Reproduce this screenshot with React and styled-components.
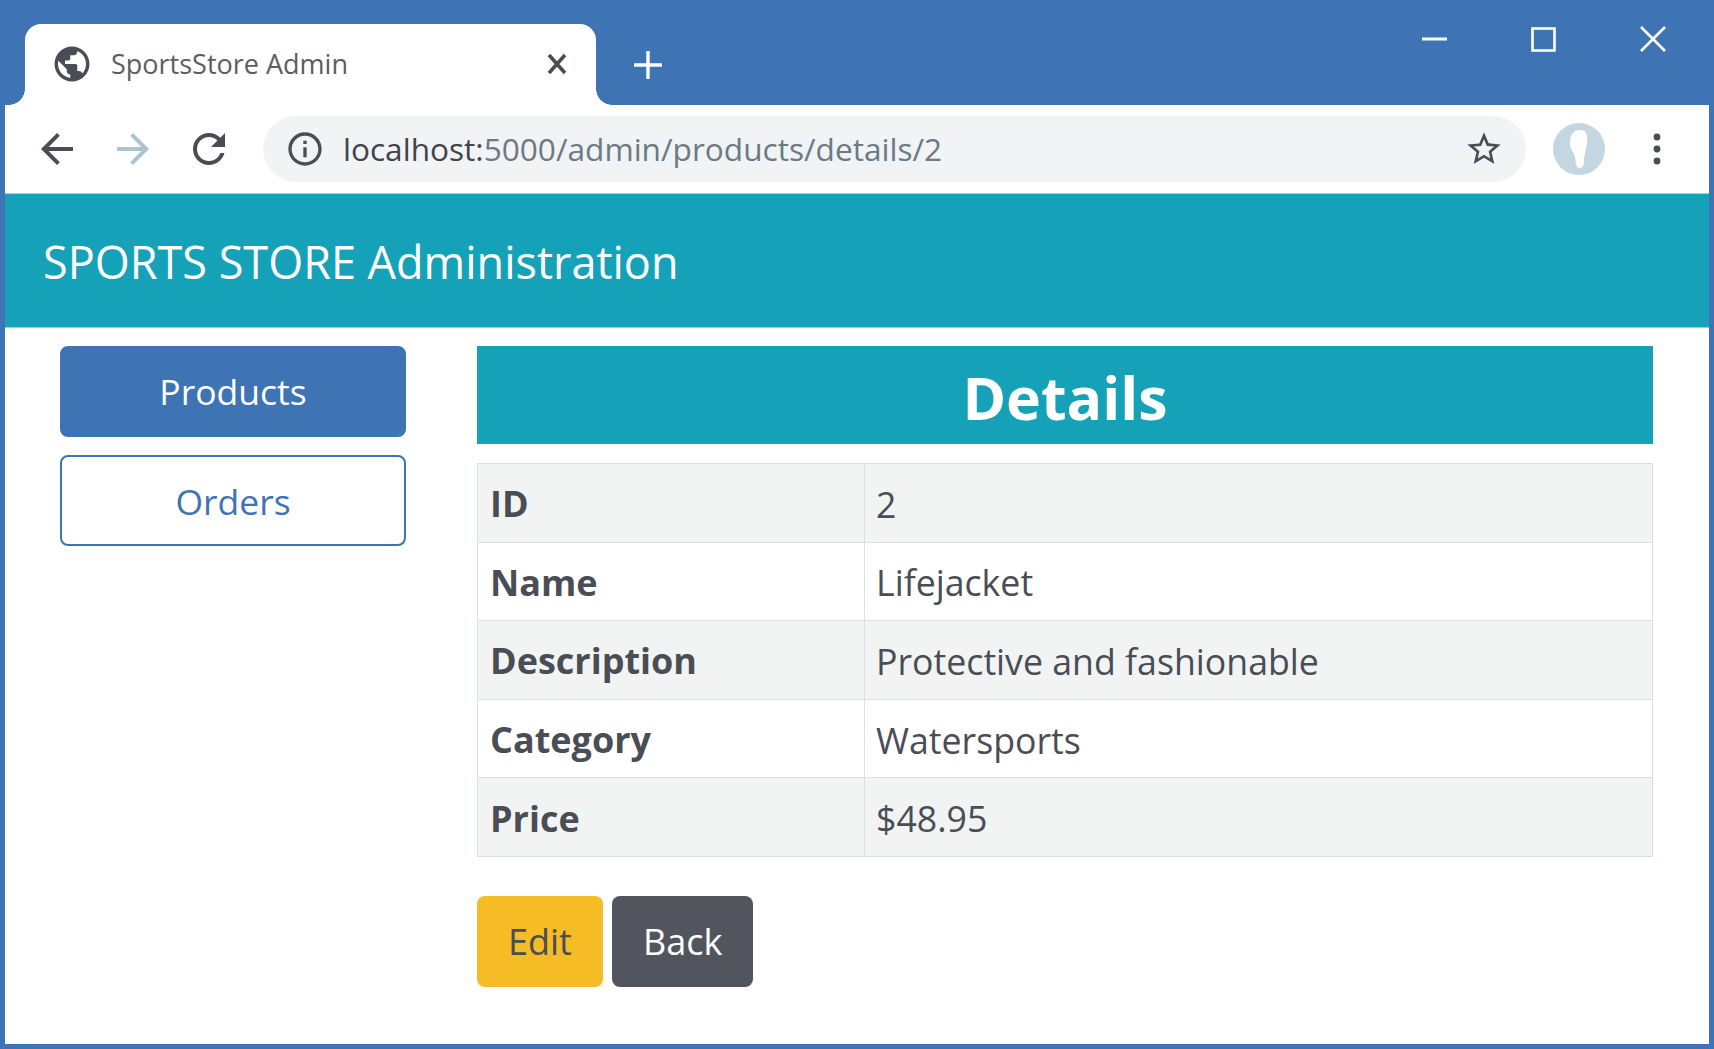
import React from 'react'
import styled, { createGlobalStyle } from 'styled-components'

const GlobalStyle = createGlobalStyle`
  html, body {
    margin: 0;
    padding: 0;
    background: #3e73b4;
  }
  body {
    font-family: "Open Sans", "Noto Sans", sans-serif;
    color: #4a4d55;
  }
`

const Frame = styled.div`
  width: 1714px;
  height: 1049px;
  box-sizing: border-box;
  padding: 0 5px 5px 5px;
  background: #3e73b4;
  display: flex;
  flex-direction: column;
  overflow: hidden;
`

const TabStrip = styled.div`
  height: 105px;
  flex: none;
  display: flex;
  align-items: flex-start;
  padding: 24px 0 0 20px;
  box-sizing: border-box;
`

const Tab = styled.div`
  position: relative;
  width: 571px;
  height: 81px;
  box-sizing: border-box;
  background: #fff;
  border-radius: 16px 16px 0 0;
  display: flex;
  align-items: center;
  padding: 0 28px 2px 26px;
  gap: 18px;

  &::before,
  &::after {
    content: '';
    position: absolute;
    bottom: 0;
    width: 16px;
    height: 16px;
  }
  &::before {
    left: -16px;
    background: radial-gradient(circle at 0 0, transparent 15.5px, #fff 16px);
  }
  &::after {
    right: -16px;
    background: radial-gradient(circle at 100% 0, transparent 15.5px, #fff 16px);
  }
`

const TabTitle = styled.span`
  flex: 1;
  font-size: 27px;
  color: #5a5d64;
  white-space: nowrap;
`

const NewTab = styled.div`
  display: flex;
  margin: 26px 0 0 37px;
`

const WindowControls = styled.div`
  margin-left: auto;
  display: flex;
  align-items: center;
  gap: 84px;
  padding: 2px 43px 0 0;
`

const Toolbar = styled.div`
  height: 89px;
  flex: none;
  box-sizing: border-box;
  background: #fff;
  border-bottom: 1px solid #b5c9d6;
  display: flex;
  align-items: center;
  padding: 0 0 0 28px;
  color: #4a4d55;
`

const NavIcons = styled.div`
  display: flex;
  align-items: center;
  gap: 28px;
`

const Omnibox = styled.div`
  margin-left: 30px;
  width: 1263px;
  height: 66px;
  box-sizing: border-box;
  border-radius: 33px;
  background: #f1f3f4;
  display: flex;
  align-items: center;
  padding: 0 22px 0 22px;
  gap: 18px;
`

const Url = styled.div`
  flex: 1;
  font-size: 31.6px;
  color: #6b7a84;
  white-space: nowrap;
  padding-bottom: 2px;
  b {
    font-weight: 400;
    color: #40444c;
  }
`

const Avatar = styled.div`
  display: flex;
  margin-left: 27px;
`

const MenuDots = styled.div`
  display: flex;
  margin-left: 47px;
`

const Page = styled.div`
  flex: 1;
  background: #fff;
  display: flex;
  flex-direction: column;
`

const Banner = styled.header`
  height: 134px;
  flex: none;
  box-sizing: border-box;
  background: #15a2b8;
  border-bottom: 1px solid #a8c6d4;
  color: #fff;
  font-size: 45px;
  display: flex;
  align-items: center;
  padding: 2px 0 0 38px;
`

const Body = styled.div`
  display: grid;
  grid-template-columns: 346px 1176px;
  column-gap: 71px;
  padding: 18px 0 0 55px;
`

const Sidebar = styled.nav`
  display: flex;
  flex-direction: column;
  gap: 18px;
`

const NavButton = styled.div`
  height: 91px;
  box-sizing: border-box;
  border-radius: 8px;
  border: 2px solid #3e73b4;
  background: ${p => (p.$active ? '#3e73b4' : '#fff')};
  color: ${p => (p.$active ? '#fff' : '#3e73b4')};
  font-size: 35.5px;
  display: flex;
  align-items: center;
  justify-content: center;
  padding-bottom: ${p => (p.$active ? '2px' : '0')};
`

const Main = styled.main`
  display: flex;
  flex-direction: column;
`

const Title = styled.h1`
  margin: 0;
  height: 98px;
  background: #15a2b8;
  color: #fff;
  font-size: 59px;
  font-weight: 700;
  line-height: 102px;
  text-align: center;
`

const DetailsTable = styled.table`
  margin-top: 19px;
  width: 100%;
  height: 394px;
  border-collapse: collapse;
  table-layout: fixed;
  font-size: 36px;
  color: #4a4d55;

  tr:nth-child(odd) {
    background: #f2f4f4;
  }
  th,
  td {
    border: 1px solid #d8e0e5;
    padding: 2px 12px 0;
    text-align: left;
  }
  th {
    width: 362px;
    font-weight: 700;
  }
  td {
    font-size: 35.7px;
    font-weight: 400;
    padding-left: 11px;
  }
`

const Actions = styled.div`
  display: flex;
  gap: 9px;
  margin-top: 39px;
`

const ActionButton = styled.div`
  height: 91px;
  box-sizing: border-box;
  padding: 0 31px;
  border-radius: 8px;
  background: ${p => (p.$variant === 'warning' ? '#f6bc26' : '#53555e')};
  color: ${p => (p.$variant === 'warning' ? '#4a4d55' : '#fff')};
  font-size: 36px;
  display: flex;
  align-items: center;
`

const rows = [
  ['ID', '2'],
  ['Name', 'Lifejacket'],
  ['Description', 'Protective and fashionable'],
  ['Category', 'Watersports'],
  ['Price', '$48.95'],
]

const Icon = ({ size = 24, color = 'currentColor', d }) => (
  <svg width={size} height={size} viewBox="0 0 24 24" fill={color}>
    <path d={d} />
  </svg>
)

const icons = {
  globe:
    'M12 2C6.48 2 2 6.48 2 12s4.48 10 10 10 10-4.48 10-10S17.52 2 12 2zm-1 17.93c-3.95-.49-7-3.85-7-7.93 0-.62.08-1.21.21-1.79L9 15v1c0 1.1.9 2 2 2v1.93zm6.9-2.54c-.26-.81-1-1.39-1.9-1.39h-1v-3c0-.55-.45-1-1-1H8v-2h2c.55 0 1-.45 1-1V7h2c1.1 0 2-.9 2-2v-.41c2.93 1.19 5 4.06 5 7.41 0 2.08-.8 3.97-2.1 5.39z',
  back: 'M20 11H7.83l5.59-5.59L12 4l-8 8 8 8 1.41-1.41L7.83 13H20v-2z',
  forward: 'M4 11h12.17l-5.59-5.59L12 4l8 8-8 8-1.41-1.41L16.17 13H4v-2z',
  reload:
    'M17.65 6.35C16.2 4.9 14.21 4 12 4c-4.42 0-7.99 3.58-7.99 8s3.57 8 7.99 8c3.73 0 6.84-2.55 7.73-6h-2.08c-.82 2.33-3.04 4-5.65 4-3.31 0-6-2.69-6-6s2.69-6 6-6c1.66 0 3.14.69 4.22 1.78L13 11h7V4l-2.35 2.35z',
  info:
    'M11 7h2v2h-2zm0 4h2v6h-2zm1-9C6.48 2 2 6.48 2 12s4.48 10 10 10 10-4.48 10-10S17.52 2 12 2zm0 18c-4.41 0-8-3.59-8-8s3.59-8 8-8 8 3.59 8 8-3.59 8-8 8z',
  star:
    'M22 9.24l-7.19-.62L12 2 9.19 8.63 2 9.24l5.46 4.73L5.82 21 12 17.27 18.18 21l-1.63-7.03L22 9.24zM12 15.4l-3.76 2.27 1-4.28-3.32-2.88 4.38-.38L12 6.1l1.71 4.04 4.38.38-3.32 2.88 1 4.28L12 15.4z',
}

const App = () => (
  <>
    <GlobalStyle />
    <Frame>
      <TabStrip>
        <Tab>
          <Icon size={42} color="#4a4d55" d={icons.globe} />
          <TabTitle>SportsStore Admin</TabTitle>
          <svg width="22" height="22" viewBox="0 0 22 22" stroke="#4a4d55" strokeWidth="3.6">
            <path d="M3 2l16 18M19 2L3 20" />
          </svg>
        </Tab>
        <NewTab>
          <svg width="30" height="30" viewBox="0 0 30 30" stroke="#fff" strokeWidth="3.4">
            <path d="M15 1v28M1 15h28" />
          </svg>
        </NewTab>
        <WindowControls>
          <svg width="25" height="26" viewBox="0 0 25 26" stroke="#fff" strokeWidth="3">
            <path d="M0 13h25" />
          </svg>
          <svg width="25" height="25" viewBox="0 0 25 25" fill="none" stroke="#fff" strokeWidth="2.6">
            <rect x="1.5" y="1.5" width="22" height="22" />
          </svg>
          <svg width="26" height="26" viewBox="0 0 26 26" stroke="#fff" strokeWidth="2.6">
            <path d="M1 1l24 24M25 1L1 25" />
          </svg>
        </WindowControls>
      </TabStrip>
      <Toolbar>
        <NavIcons>
          <Icon size={48} color="#4a4d55" d={icons.back} />
          <Icon size={48} color="#a9c4d3" d={icons.forward} />
          <Icon size={48} color="#4a4d55" d={icons.reload} />
        </NavIcons>
        <Omnibox>
          <Icon size={40} color="#4a4d55" d={icons.info} />
          <Url>
            <b>localhost:</b>5000/admin/products/details/2
          </Url>
          <Icon size={40} color="#4a4d55" d={icons.star} />
        </Omnibox>
        <Avatar>
          <svg width="52" height="52" viewBox="0 0 52 52">
            <circle cx="26" cy="26" r="26" fill="#c3d6e2" />
            <path d="M17 20c0-9 4-13 10-13 7 0 8 6 7 14-1 7-3 11-3 17 0 4-1 7-4 7-5 0-4-6-5-11-1-4-5-8-5-14z" fill="#fff" />
          </svg>
        </Avatar>
        <MenuDots>
          <svg width="10" height="34" viewBox="0 0 10 34" fill="#4a4d55">
            <circle cx="5" cy="5" r="3.4" />
            <circle cx="5" cy="17" r="3.4" />
            <circle cx="5" cy="29" r="3.4" />
          </svg>
        </MenuDots>
      </Toolbar>
      <Page>
        <Banner>SPORTS STORE Administration</Banner>
        <Body>
          <Sidebar>
            <NavButton $active>Products</NavButton>
            <NavButton>Orders</NavButton>
          </Sidebar>
          <Main>
            <Title>Details</Title>
            <DetailsTable>
              <tbody>
                {rows.map(([label, value]) => (
                  <tr key={label}>
                    <th>{label}</th>
                    <td>{value}</td>
                  </tr>
                ))}
              </tbody>
            </DetailsTable>
            <Actions>
              <ActionButton $variant="warning">Edit</ActionButton>
              <ActionButton>Back</ActionButton>
            </Actions>
          </Main>
        </Body>
      </Page>
    </Frame>
  </>
)

export default App
